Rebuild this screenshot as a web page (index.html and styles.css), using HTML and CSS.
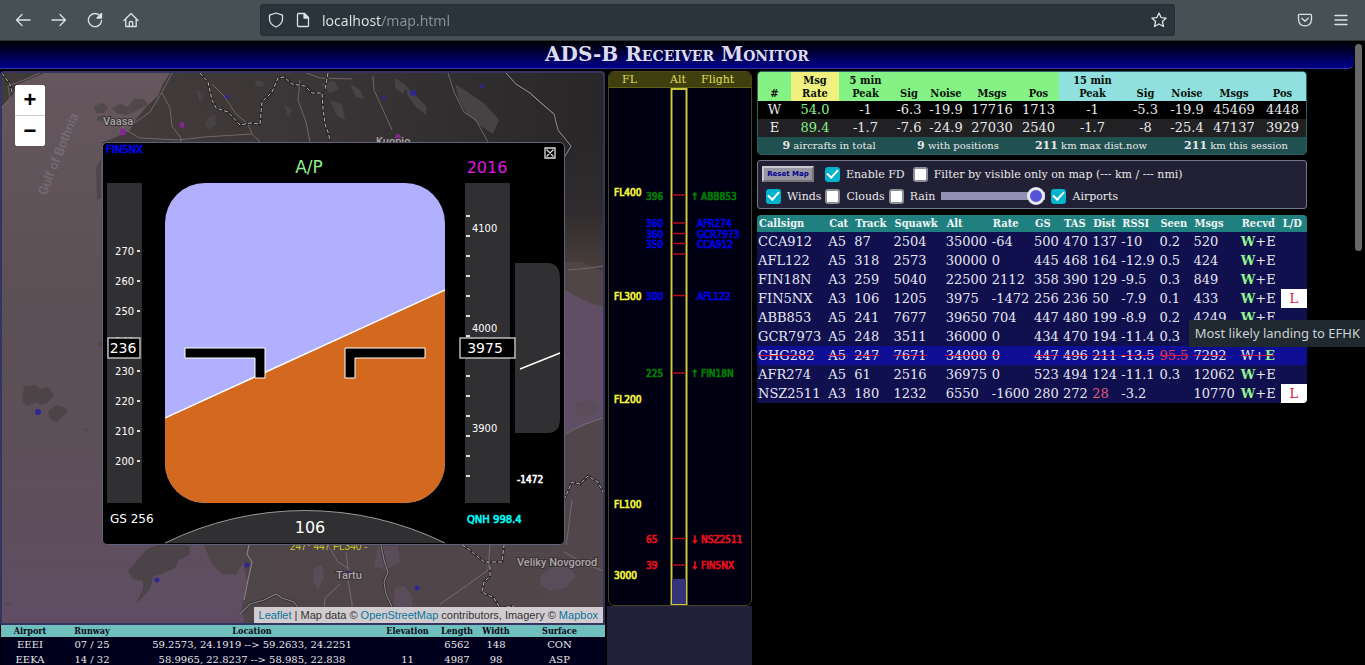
FILE: index.html
```html
<!DOCTYPE html>
<html lang="en">
<head>
<meta charset="utf-8">
<title>ADS-B Receiver Monitor</title>
<link rel="stylesheet" href="styles.css">
</head>
<body>
<div class="browser">
  <nav class="toolbar" aria-label="Browser">
    <div class="nav-buttons">
      <button class="tool" aria-label="Back"><svg width="16" height="16" viewBox="0 0 16 16"><path d="M15 8H1.500M7 2.500L1.500 8L7 13.500"/></svg></button>
      <button class="tool" aria-label="Forward"><svg width="16" height="16" viewBox="0 0 16 16"><path d="M1 8H14.500M9 2.500L14.500 8L9 13.500"/></svg></button>
      <button class="tool" aria-label="Reload"><svg width="16" height="16" viewBox="0 0 16 16"><path d="M13.200 4A6.600 6.600 0 1 0 14.600 8.500"/><path d="M14.500 1.500V6H10Z" fill="#dbe1e3"/></svg></button>
      <button class="tool" aria-label="Home"><svg width="16" height="16" viewBox="0 0 16 16"><path d="M1 8.500L8 1.500L15 8.500M2.800 7V14.500H13.200V7M6.300 14.500V10.500Q6.300 9.500 8 9.500T9.700 10.500V14.500"/></svg></button>
    </div>
    <div class="address">
      <svg class="tool-icon" width="16" height="16" viewBox="0 0 16 16"><path d="M8 1L14.500 3.200V7.500Q14 12.500 8 15Q2 12.500 1.500 7.500V3.200Z"/></svg>
      <svg class="tool-icon" width="14" height="16" viewBox="0 0 14 16"><path d="M2.500 1.500H8.500L12.500 5.500V13.500Q12.500 14.500 11.500 14.500H2.500Q1.500 14.500 1.500 13.500V2.500Q1.500 1.500 2.500 1.500Z"/><path d="M8 1.500V6H12.500Z" fill="#dbe1e3"/></svg>
      <input class="url" type="text" value="localhost/map.html" aria-label="Address">
      <button class="tool star" aria-label="Bookmark this page"><svg width="16" height="16" viewBox="0 0 16 16"><path d="M8 1L10.100 5.600L15.200 6.100L11.400 9.500L12.500 14.500L8 12L3.500 14.500L4.600 9.500L.8 6.100L5.900 5.600Z"/></svg></button>
    </div>
    <div class="menu-buttons">
      <button class="tool" aria-label="Save to Pocket"><svg width="16" height="16" viewBox="0 0 16 16"><path d="M2.500 2.300H13.500Q14.500 2.300 14.500 3.500V7.500Q14 13.800 8 13.900Q2 13.800 1.500 7.500V3.500Q1.500 2.300 2.500 2.300ZM4.800 6.300L8 9.300L11.200 6.300"/></svg></button>
      <button class="tool" aria-label="Menu"><svg width="16" height="16" viewBox="0 0 16 16"><path d="M2 3.500H14M2 8H14M2 12.500H14"/></svg></button>
    </div>
  </nav>

  <div class="viewport">
    <div class="page">
      <header class="banner"><h1>ADS-B Receiver Monitor</h1></header>
      <main class="columns">
        <section class="left">
          <div class="map">
            <svg class="map-canvas" viewBox="2 73 601 550" preserveAspectRatio="xMidYMid slice" role="img" aria-label="Map">
              <defs>
                <linearGradient id="sea" x1="0" y1="0" x2="0" y2="1"><stop offset="0" stop-color="#65575d"/><stop offset=".45" stop-color="#5b5055"/><stop offset=".75" stop-color="#5e4f5a"/><stop offset="1" stop-color="#604d64"/></linearGradient>
                <linearGradient id="north" x1="0" y1="0" x2="1" y2="0"><stop offset="0" stop-color="#443c3c"/><stop offset=".5" stop-color="#383435"/><stop offset="1" stop-color="#282627"/></linearGradient>
                <linearGradient id="east" x1="0" y1="0" x2="0" y2="1"><stop offset="0" stop-color="#292728"/><stop offset=".55" stop-color="#302c2d"/><stop offset="1" stop-color="#4a403d"/></linearGradient>
                <linearGradient id="south" x1="0" y1="0" x2="1" y2="0"><stop offset="0" stop-color="#4e4549"/><stop offset="1" stop-color="#51464a"/></linearGradient>
              </defs>
              <rect x="2" y="73" width="601" height="551" fill="url(#sea)"/>
              <path d="M2 73H44L30 79L18 84L12 96L6 102L2 106Z" fill="#413a3b"/>
              <path d="M170 73L163 84L158 96L147 106L137 118L130 130L112 139L100 143H603V73Z" fill="url(#north)"/>
              <path d="M94 106l8-3 6 4-4 6-8 0zM112 108l8-4 8 3 6-8 10 0 4 6-12 6-10 4-10-2zM98 116l5 1-2 5-4-2z" fill="#51484b"/>
              <path d="M207 118l8-3 1 10-6 5-5-5zM255 80l9 2-1 5-7-1zM320 84l14-3 5 8-9 4zM330 100l12 4 3 16-8-4zM350 84l10 6 4 9-8-2zM395 78l12 8-4 8-8-6zM404 84l10 10 12 12 0 9-10-8-8-11zM455 84l14 9 16 11 14 16-6 14-12-8-14-12-8-14zM284 104l8 6-4 7zM196 90l8 4-4 10z" fill="#474344"/>
              <path d="M560 140H603V272L580 262L565 270Z" fill="url(#east)"/>
              <path d="M560 262L580 262L603 272V306L585 302L565 290Z" fill="#514446"/>
              <path d="M560 288L584 300L603 310V418L560 434Z" fill="#604e64"/>
              <path d="M563 434L603 418V624H244L242 605L247 582L243 562L236 575L222 574L211 563L204 545H563Z" fill="url(#south)"/>
              <path d="M575 404l14-5 12 8-8 8-16 1zM540 576l12-9 18 0 6 9-10 12-16 3-9-6zM314 568l8-3 2 12-6 12-5-8zM378 546l20 0 2 16-14 8-12-4zM395 588l10-2 8 12-3 14-16-2z" fill="#5b4c59"/>
              <path d="M24 386l12-1 4 4 8-2 6 8-4 6-8 4-6-3-8 4-6-4zM48 411l8-6 8 2 4 5-12 10-6-3zM84 430l4-2-2 4z" fill="#4c4446"/>
              <path d="M146 550l18-8 26 4-1 9-10 5-4 8-14 6-8 3-3 12-8 9-6 5 7-14 0-8-10-2-5-8z" fill="#4b4347"/>
              <path d="M96 168l5-10v40l-4 2zM97 344l4-4v8zM4 603l8 1-5 2z" fill="#50464a"/>
              <g class="road">
                <path d="M2 108L10 98L8 86L24 80L40 73M172 73L162 92L150 112L136 122L122 128M162 93L170 108L172 126L181 138L181 142M122 128L140 138L178 140L204 137L252 134L260 142M212 84L224 96L236 114L248 124L252 134M300 80L298 100L306 122L310 142M373 76L374 90L384 112L392 130M306 73L320 78L352 79M448 73L454 92L464 112L476 120L488 142M568 270L590 268L603 266M565 434L585 424L603 418M564 552L582 562L603 571M440 604L466 586L488 570L490 545M328 545L338 562L348 568L348 580L352 604L352 624M348 568L346 552M340 584L325 598L324 610M572 500L568 532L566 545"/>
              </g>
              <g class="border-outline">
                <path d="M200 73L208 82L212 100L216 108L228 112L240 125L250 123L260 124L262 102L272 92L278 78L284 77L292 84L305 86L312 93L322 93L323 108L325 124L328 132L330 140M328 73L325 90M506 73L516 84L530 93L540 102L554 114L558 130L571 146L564 158M564 500L572 482L580 484L588 476L598 482L603 492M462 545L470 550L484 562L502 562L504 545M490 566L490 576L484 582L482 592L494 598L500 608L514 606M240 614L250 604L264 600L276 594L282 598L294 602L300 610M381 545L384 560L388 572L384 582L386 594L392 607M2 73L10 84L12 92"/>
              </g>
              <g class="border-line">
                <path d="M200 73L208 82L212 100L216 108L228 112L240 125L250 123L260 124L262 102L272 92L278 78L284 77L292 84L305 86L312 93L322 93L323 108L325 124L328 132L330 140M328 73L325 90M564 500L572 482L580 484L588 476L598 482L603 492M462 545L470 550L484 562L502 562L504 545M490 566L490 576L484 582L482 592L494 598L500 608L514 606M2 73L10 84L12 92"/>
              </g>
              <path class="river" d="M506 73L516 84L530 93L540 102L554 114L558 130L571 146L564 158M381 545L384 560L388 572L384 582L386 594L392 607M240 614L250 604L264 600L276 594L282 598L294 602L300 610M249 545L247 554L252 562L248 580L244 600"/>
              <g fill="#2c2792"><circle cx="227" cy="97" r="2"/><circle cx="384" cy="98" r="2"/><circle cx="413" cy="93" r="3"/><circle cx="482" cy="86" r="2"/><circle cx="38" cy="412" r="3"/><circle cx="157" cy="580" r="2.500"/><circle cx="417" cy="588" r="2.500"/><circle cx="247" cy="565" r="2.500"/><circle cx="348" cy="573" r="2.500"/></g>
              <g fill="#852690"><ellipse cx="123" cy="132" rx="3" ry="3.500"/><ellipse cx="182" cy="125" rx="2.500" ry="3"/><ellipse cx="398" cy="138" rx="3" ry="4"/></g>
              <text class="sea-name" transform="translate(46 196) rotate(-68)">Gulf of Bothnia</text>
              <g class="place"><text x="103" y="125">Vaasa</text><text x="376" y="145">Kuopio</text><text x="336" y="579">Tartu</text><text x="517" y="566">Veliky Novgorod</text></g>
              <text class="plane-label" x="290" y="550">247° 447 FL340 -</text>
            </svg>

            <div class="zoom">
              <button class="zoom-button" aria-label="Zoom in">+</button>
              <button class="zoom-button" aria-label="Zoom out">−</button>
            </div>

            <div class="flight-display">
              <svg viewBox="103 143 461 401" role="img" aria-label="Primary flight display">
                <defs><clipPath id="horizon"><rect x="165" y="183" width="280" height="320" rx="40"/></clipPath></defs>
                <text class="pfd-call" x="106" y="153">FIN5NX</text>
                <text class="pfd-mode" x="309" y="173">A/P</text>
                <text class="pfd-target" x="487" y="173">2016</text>
                <rect class="tape" x="107" y="183" width="35" height="320"/>
                <g class="tape-label end"><text x="134" y="255">270</text><text x="134" y="285">260</text><text x="134" y="315">250</text><text x="134" y="345">240</text><text x="134" y="375">230</text><text x="134" y="405">220</text><text x="134" y="435">210</text><text x="134" y="465">200</text></g>
                <path class="tick" d="M137 251h3M137 281h3M137 311h3M137 371h3M137 401h3M137 431h3M137 461h3"/>
                <g clip-path="url(#horizon)">
                  <rect x="165" y="183" width="280" height="320" fill="#b0b0ff"/>
                  <path d="M164 418.500L446 289.500V504H164Z" fill="#d2691e" stroke="#fff" stroke-width="1.500"/>
                </g>
                <path class="wing" d="M185 348H265V378H255V358H185ZM345 348H425V358H355V378H345Z"/>
                <rect class="readout" x="108" y="338" width="32" height="20"/>
                <text class="readout-text" x="123" y="353">236</text>
                <rect class="tape" x="465" y="183" width="45" height="320"/>
                <path class="tick" d="M466 216h4M466 236h4M466 256h4M466 276h4M466 296h4M466 316h4M466 336h4M466 376h4M466 396h4M466 416h4M466 436h4M466 456h4M466 476h4"/>
                <g class="tape-label"><text x="472" y="232">4100</text><text x="472" y="332">4000</text><text x="472" y="432">3900</text></g>
                <path class="tape" d="M515 263H547Q560 263 560 278V419Q560 433 547 433H515Z"/>
                <rect class="readout" x="460" y="338" width="55" height="20"/>
                <text class="readout-text" x="485" y="353">3975</text>
                <path d="M520 369L560 353" stroke="#fff" stroke-width="1.500"/>
                <text class="pfd-rate" x="517" y="483">-1472</text>
                <text class="pfd-qnh" x="467" y="523">QNH 998.4</text>
                <text class="pfd-gs" x="110" y="523">GS 256</text>
                <path class="compass" d="M165 543A318 318 0 0 1 445 543"/>
                <text class="pfd-heading" x="310" y="533">106</text>
              </svg>
              <button class="close" aria-label="Close flight display"><svg width="12" height="12" viewBox="0 0 12 12"><path d="M1 1H11V11H1ZM2.500 2.500L9.500 9.500M9.500 2.500L2.500 9.500"/></svg></button>
            </div>
            <p class="attribution"><a href="#leaflet">Leaflet</a> | Map data © <a href="#osm">OpenStreetMap</a> contributors, Imagery © <a href="#mapbox">Mapbox</a></p>
          </div>

          <div class="airports-wrap">
            <table class="airports">
              <colgroup><col class="w-58"><col class="w-66"><col class="w-254"><col class="w-57"><col class="w-42"><col class="w-36"><col class="w-91"></colgroup>
              <thead><tr><th>Airport</th><th>Runway</th><th>Location</th><th>Elevation</th><th>Length</th><th>Width</th><th>Surface</th></tr></thead>
              <tbody>
                <tr><td>EEEI</td><td>07 / 25</td><td>59.2573, 24.1919 --&gt; 59.2633, 24.2251</td><td></td><td>6562</td><td>148</td><td>CON</td></tr>
                <tr><td>EEKA</td><td>14 / 32</td><td>58.9965, 22.8237 --&gt; 58.985, 22.838</td><td>11</td><td>4987</td><td>98</td><td>ASP</td></tr>
              </tbody>
            </table>
          </div>
        </section>

        <section class="levels">
          <div class="levels-panel">
            <div class="levels-head"><span>FL</span><span>Alt</span><span>Flight</span></div>
            <svg viewBox="609 88 142 517" role="img" aria-label="Flights by altitude">
              <rect x="671.500" y="89" width="15" height="516" fill="none" stroke="#c8c83a" stroke-width="2"/>
              <rect x="672" y="579" width="14" height="25" fill="#343478"/>
              <path d="M672 195H686M672 223H686M672 233.500H686M672 243.500H686M672 254H686M672 295.500H686M672 373H686M672 538.500H686M672 565H686" stroke="#b01018" stroke-width="1.500"/>
              <g class="level yellow"><text x="614" y="196">FL400</text><text x="614" y="300">FL300</text><text x="614" y="403">FL200</text><text x="614" y="508">FL100</text><text x="614" y="579">3000</text></g>
              <g class="level green"><text x="646" y="200">396</text><text x="691" y="200">↑</text><text x="701" y="200">ABB853</text><text x="646" y="377">225</text><text x="691" y="377">↑</text><text x="701" y="377">FIN18N</text></g>
              <g class="level blue"><text x="646" y="227">360</text><text x="697" y="227">AFR274</text><text x="646" y="238">360</text><text x="697" y="238">GCR7973</text><text x="646" y="248">350</text><text x="697" y="248">CCA912</text><text x="646" y="300">300</text><text x="697" y="300">AFL122</text></g>
              <g class="level red"><text x="646" y="543">65</text><text x="691" y="543">↓</text><text x="701" y="543">NSZ2511</text><text x="646" y="569">39</text><text x="691" y="569">↓</text><text x="701" y="569">FIN5NX</text></g>
            </svg>
          </div>
        </section>

        <section class="right">
          <div class="stats">
            <table class="receivers">
              <colgroup><col class="w-33"><col class="w-48"><col class="w-53"><col class="w-34"><col class="w-40"><col class="w-52"><col class="w-41"><col class="w-67"><col class="w-39"><col class="w-44"><col class="w-50"><col class="w-47"></colgroup>
              <thead><tr><th>#</th><th class="rate-head">Msg<br>Rate</th><th>5 min<br>Peak</th><th>Sig</th><th>Noise</th><th>Msgs</th><th>Pos</th><th class="long">15 min<br>Peak</th><th class="long">Sig</th><th class="long">Noise</th><th class="long">Msgs</th><th class="long">Pos</th></tr></thead>
              <tbody>
                <tr><td>W</td><td class="rate">54.0</td><td>-1</td><td>-6.3</td><td>-19.9</td><td>17716</td><td>1713</td><td>-1</td><td>-5.3</td><td>-19.9</td><td>45469</td><td>4448</td></tr>
                <tr><td>E</td><td class="rate">89.4</td><td>-1.7</td><td>-7.6</td><td>-24.9</td><td>27030</td><td>2540</td><td>-1.7</td><td>-8</td><td>-25.4</td><td>47137</td><td>3929</td></tr>
              </tbody>
            </table>
            <div class="totals"><span><b>9</b> aircrafts in total</span><span><b>9</b> with positions</span><span><b>211</b> km max dist.now</span><span><b>211</b> km this session</span></div>
          </div>

          <form class="controls">
            <div class="control-row">
              <button class="reset" type="button">Reset Map</button>
              <label><input type="checkbox" checked>Enable FD</label>
              <label><input type="checkbox">Filter by visible only on map (--- km / --- nmi)</label>
            </div>
            <div class="control-row second">
              <label><input type="checkbox" checked>Winds</label>
              <label><input type="checkbox">Clouds</label>
              <label><input type="checkbox">Rain</label>
              <input class="slider" type="range" value="100" aria-label="Layer opacity">
              <label><input type="checkbox" checked>Airports</label>
            </div>
          </form>

          <div class="aircraft-wrap">
            <table class="aircraft">
              <colgroup><col class="w-70"><col class="w-26"><col class="w-39"><col class="w-52"><col class="w-46"><col class="w-42"><col class="w-29"><col class="w-29"><col class="w-29"><col class="w-38"><col class="w-34"><col class="w-47"><col class="w-41"><col class="w-26"></colgroup>
              <thead><tr><th>Callsign</th><th>Cat</th><th>Track</th><th>Squawk</th><th>Alt</th><th>Rate</th><th>GS</th><th>TAS</th><th>Dist</th><th>RSSI</th><th>Seen</th><th>Msgs</th><th>Recvd</th><th>L/D</th></tr></thead>
              <tbody>
                <tr><td>CCA912</td><td>A5</td><td>87</td><td>2504</td><td>35000</td><td>-64</td><td>500</td><td>470</td><td>137</td><td>-10</td><td>0.2</td><td>520</td><td><b>W</b>+E</td><td></td></tr>
                <tr><td>AFL122</td><td>A5</td><td>318</td><td>2573</td><td>30000</td><td>0</td><td>445</td><td>468</td><td>164</td><td>-12.9</td><td>0.5</td><td>424</td><td><b>W</b>+E</td><td></td></tr>
                <tr><td>FIN18N</td><td>A3</td><td>259</td><td>5040</td><td>22500</td><td>2112</td><td>358</td><td>390</td><td>129</td><td>-9.5</td><td>0.3</td><td>849</td><td><b>W</b>+E</td><td></td></tr>
                <tr><td>FIN5NX</td><td>A3</td><td>106</td><td>1205</td><td>3975</td><td>-1472</td><td>256</td><td>236</td><td>50</td><td>-7.9</td><td>0.1</td><td>433</td><td><b>W</b>+E</td><td class="landing">L<span class="tooltip" role="tooltip">Most likely landing to EFHK</span></td></tr>
                <tr><td>ABB853</td><td>A5</td><td>241</td><td>7677</td><td>39650</td><td>704</td><td>447</td><td>480</td><td>199</td><td>-8.9</td><td>0.2</td><td>4249</td><td><b>W</b>+E</td><td></td></tr>
                <tr><td>GCR7973</td><td>A5</td><td>248</td><td>3511</td><td>36000</td><td>0</td><td>434</td><td>470</td><td>194</td><td>-11.4</td><td>0.3</td><td></td><td></td><td></td></tr>
                <tr class="lost"><td>CHG282</td><td>A5</td><td>247</td><td>7671</td><td>34000</td><td>0</td><td>447</td><td>496</td><td>211</td><td>-13.5</td><td class="alert">95.5</td><td>7292</td><td>W+<b>E</b></td><td></td></tr>
                <tr><td>AFR274</td><td>A5</td><td>61</td><td>2516</td><td>36975</td><td>0</td><td>523</td><td>494</td><td>124</td><td>-11.1</td><td>0.3</td><td>12062</td><td><b>W</b>+E</td><td></td></tr>
                <tr><td>NSZ2511</td><td>A3</td><td>180</td><td>1232</td><td>6550</td><td>-1600</td><td>280</td><td>272</td><td class="near">28</td><td>-3.2</td><td></td><td>10770</td><td><b>W</b>+E</td><td class="landing">L</td></tr>
              </tbody>
            </table>
          </div>
        </section>
      </main>
    </div>
    <div class="scroll-gutter" aria-hidden="true"><div class="scroll-thumb"></div></div>
  </div>
</div>
</body>
</html>
```
FILE: styles.css
```css
* { box-sizing: border-box; }
body { margin: 0; background: #000; color: #e8e8ea; font-family: "DejaVu Serif", serif; }
button, input { font: inherit; margin: 0; }
.browser { height: 100vh; display: flex; flex-direction: column; overflow: hidden; }

/* Browser toolbar */
.toolbar { flex: none; height: 41px; display: flex; align-items: center; padding: 0 16px 0 15px; background: #465156; border-bottom: 1px solid #2b3337; }
.nav-buttons { flex: 0 1 245px; display: flex; gap: 20px; }
.tool { flex: none; display: flex; padding: 0; border: 0; background: none; }
.tool svg, .tool-icon { fill: none; stroke: #dbe1e3; stroke-width: 1.3; stroke-linejoin: round; stroke-linecap: round; }
.address { flex: 1; height: 32px; display: flex; align-items: center; gap: 12px; padding: 0 7px; border: 1px solid #253036; border-radius: 3px; background: #2a353b; }
.tool-icon { flex: none; }
.url { flex: 1; min-width: 0; padding: 0; border: 0; outline: 0; font: 14px "Noto Sans", sans-serif; color: transparent; background: linear-gradient(90deg, #e2e6e8 60px, #879197 60px); background-clip: text; -webkit-background-clip: text; }
.menu-buttons { flex: 0 1 174px; display: flex; justify-content: flex-end; gap: 20px; }

/* Page frame */
.viewport { flex: 1; min-height: 0; display: flex; }
.page { flex: 1; min-width: 0; display: flex; flex-direction: column; }
.scroll-gutter { width: 11px; padding: 3px 3px 0 1px; }
.scroll-thumb { height: 207px; border-radius: 4px; background: #68686a; }
.banner { flex: none; height: 28px; border-bottom: 1px solid #3636a0; border-radius: 0 0 6px 0; background: linear-gradient(#000, #00008b); text-align: center; }
.banner h1 { margin: 0; font-size: 20px; line-height: 27px; font-variant: small-caps; color: #dcdcf0; }
.columns { flex: 1; min-height: 0; display: grid; grid-template-columns: minmax(0, 605fr) minmax(0, 145fr) minmax(0, 553fr) 45px; gap: 0 2px; }

/* Map */
.left { padding-top: 2px; }
.map { position: relative; overflow: hidden; border: 2px solid #35335f; border-radius: 4px 4px 0 0; background: #5b5055; }
.map-canvas { display: block; width: 100%; }
.road path { fill: none; stroke: #7b7375; stroke-width: .8; }
.border-outline path { fill: none; stroke: #1a1919; stroke-width: 2.6; opacity: .65; }
.border-line path { fill: none; stroke: #b5b0b1; stroke-width: 1; stroke-dasharray: 4 2; }
.river { fill: none; stroke: #8b8587; stroke-width: 1.1; }
.place { font: 500 11px Roboto, sans-serif; fill: #aca5a8; stroke: #373234; stroke-width: 2; paint-order: stroke; }
.sea-name { font: 500 13px Roboto, sans-serif; fill: #776b73; }
.plane-label { font: 10px "Liberation Sans", sans-serif; fill: #c6c621; }
.zoom { position: absolute; left: 13px; top: 12px; width: 30px; border-radius: 3px; overflow: hidden; background: #fff; }
.zoom-button { display: block; width: 30px; height: 30px; padding: 0; border: 0; background: #fff; color: #000; font: bold 22px/30px "Liberation Sans", sans-serif; }
.zoom-button + .zoom-button { height: 31px; border-top: 1px solid #ccc; }
.attribution { position: absolute; right: 0; bottom: 0; margin: 0; padding: 0 5px; background: #d0cccf; color: #333; font: 11px/16px "Liberation Sans", sans-serif; white-space: nowrap; }
.attribution a { color: #0b76a0; text-decoration: none; }

/* Primary flight display */
.flight-display { position: absolute; left: 100px; top: 69px; width: 463px; border: 1px solid #60607c; border-radius: 5px; overflow: hidden; background: #000; }
.flight-display > svg { display: block; width: 100%; font-family: "DejaVu Sans", sans-serif; }
.tape { fill: #303032; }
.tape-label { font: 11px "DejaVu Sans Condensed", "DejaVu Sans", sans-serif; fill: #fff; }
.tape-label.end { text-anchor: end; }
.tick { stroke: #ddd; stroke-width: 2; }
.wing { fill: #000; stroke: #fff; stroke-width: 1; }
.readout { fill: #000; stroke: #bababa; stroke-width: 1.5; }
.readout-text { font-size: 14px; fill: #fff; text-anchor: middle; }
.pfd-call { font-size: 10px; fill: #00f; stroke: #00f; stroke-width: .6; }
.pfd-mode { font-size: 17px; fill: #90ee90; text-anchor: middle; }
.pfd-target { font-size: 16px; fill: #e015e0; text-anchor: middle; }
.pfd-rate { font: 10px "DejaVu Sans Condensed", sans-serif; fill: #fff; stroke: #fff; stroke-width: .6; }
.pfd-qnh { font-size: 10px; fill: #0ff; stroke: #0ff; stroke-width: .6; }
.pfd-gs { font-size: 12px; fill: #fff; }
.pfd-heading { font-size: 16px; fill: #fff; text-anchor: middle; }
.compass { fill: #303032; stroke: #999; stroke-width: 1; }
.close { position: absolute; right: 8px; top: 4px; display: flex; padding: 0; border: 0; background: #000; }
.close svg { fill: none; stroke: #ddd; stroke-width: 1.3; }

/* Tables */
table { width: 100%; table-layout: fixed; border-collapse: collapse; }
th, td { padding: 0; white-space: nowrap; font-weight: normal; }
th { font-family: "DejaVu Serif Condensed", "DejaVu Serif", serif; font-weight: bold; }
.airports-wrap { padding-left: 1px; }
.airports { background: #00001c; font-size: 10px; line-height: 15px; text-align: center; }
.airports th { background: #70bfbf; color: #0a0a14; font-size: 9px; line-height: 12px; }
.w-26 { width: 26px; } .w-29 { width: 29px; } .w-33 { width: 33px; } .w-34 { width: 34px; } .w-36 { width: 36px; }
.w-38 { width: 38px; } .w-39 { width: 39px; } .w-40 { width: 40px; } .w-41 { width: 41px; } .w-42 { width: 42px; }
.w-44 { width: 44px; } .w-46 { width: 46px; } .w-47 { width: 47px; } .w-48 { width: 48px; } .w-50 { width: 50px; }
.w-52 { width: 52px; } .w-53 { width: 53px; } .w-57 { width: 57px; } .w-58 { width: 58px; } .w-66 { width: 66px; }
.w-67 { width: 67px; } .w-70 { width: 70px; } .w-91 { width: 91px; } .w-254 { width: 254px; }

/* Flight levels */
.levels { display: flex; flex-direction: column; padding-top: 2px; }
.levels::after { content: ""; flex: 1; background: #23213a; }
.levels-panel { margin-left: 1px; border: 1px solid #45451f; border-radius: 6px; overflow: hidden; background: #000012; }
.levels-head { display: grid; grid-template-columns: 41px 56px 1fr; height: 16px; padding-right: 20px; background: #40400f; border-bottom: 1px solid #60601c; color: #dede5a; font-size: 11px; line-height: 15px; text-align: center; }
.levels-head span:last-child { text-align: left; padding-left: 0; margin-left: -5px; }
.levels-panel svg { display: block; width: 100%; }
.level { font: 10px "DejaVu Sans Condensed", "DejaVu Sans", sans-serif; stroke-width: .7; }
.yellow { fill: #f0f03c; stroke: #f0f03c; }
.green { fill: #008000; stroke: #008000; }
.blue { fill: #0000e6; stroke: #0000e6; }
.red { fill: #e8101c; stroke: #e8101c; }

/* Receiver statistics */
.right { padding: 2px 0 0 3px; display: flex; flex-direction: column; gap: 5px; }
.stats { border: 1px solid #2b6262; border-radius: 4px; overflow: hidden; }
.receivers { text-align: center; font-size: 13px; line-height: 18px; }
.receivers th { background: #85f285; color: #081008; font-size: 11px; line-height: 13px; vertical-align: bottom; padding: 2px 0 1px; }
.receivers .rate-head { background: #f0f080; }
.receivers .long { background: #90e0e0; }
.receivers .rate { color: #85f285; }
.receivers tbody tr { background: #000; }
.receivers tbody tr:nth-child(2) { background: #212123; }
.totals { display: grid; grid-template-columns: 142fr 116fr 150fr 140fr; background: #205050; font-size: 10px; line-height: 17px; text-align: center; white-space: nowrap; }
.totals b { font-size: 11px; }

/* Controls */
.controls { height: 49px; padding: 2px 4px; border: 1px solid #77758c; border-radius: 3px; background: #222034; font-size: 11px; white-space: nowrap; }
.control-row { display: flex; align-items: center; height: 22px; gap: 8px; }
.control-row.second { gap: 4px; padding-left: 4px; }
.controls label { display: flex; align-items: center; gap: 6px; }
.reset { width: 52px; height: 16px; margin-right: 3px; padding: 0; border: 2px outset #c8c8cc; background: #9896a2; color: #00008b; font: bold 7px "DejaVu Sans", sans-serif; }
input[type="checkbox"] { appearance: none; width: 15px; height: 15px; border: 2px solid #8f8f9b; border-radius: 3px; background: #fff; }
input[type="checkbox"]:checked { border-color: #00b4cc; background: #00b4cc; display: grid; place-items: center; }
input[type="checkbox"]:checked::before { content: ""; width: 9px; height: 5px; margin-bottom: 3px; border: solid #fff; border-width: 0 0 2px 2px; transform: rotate(-48deg); }
.slider { appearance: none; width: 104px; height: 18px; margin: 0 2px; background: linear-gradient(#9490b4, #9490b4) center / 100% 8px no-repeat; }
.slider::-webkit-slider-thumb { appearance: none; width: 18px; height: 18px; border: 3px solid #e8e8ee; border-radius: 50%; background: #5454d8; }

/* Aircraft */
.aircraft-wrap { margin-top: 1px; }
.aircraft { font-size: 13px; line-height: 19px; text-align: left; color: #e6e6f2; }
.aircraft th { background: #208080; color: #eef6f6; font-size: 11px; line-height: 17px; padding-left: 2px; }
.aircraft td { padding-left: 1px; }
.aircraft tbody tr { background: #10104e; }
.aircraft th:first-child { border-top-left-radius: 4px; }
.aircraft th:last-child { border-top-right-radius: 4px; }
.aircraft tr:last-child td:last-child { border-bottom-right-radius: 4px; }
.aircraft b { color: #90f590; }
.aircraft tbody .lost { background: #0e0e94; }
.lost td { text-decoration: line-through #d01838; }
.aircraft .alert { color: #e04050; }
.aircraft .near { color: #e05a78; }
.aircraft .landing { position: relative; padding: 0; background: #fff; color: #e02030; text-align: center; }
.tooltip { position: absolute; right: -59px; top: 31px; padding: 5px 6px; background: #1f292f; color: #ccd2d6; font: 13px/17px "Noto Sans", sans-serif; }
```
